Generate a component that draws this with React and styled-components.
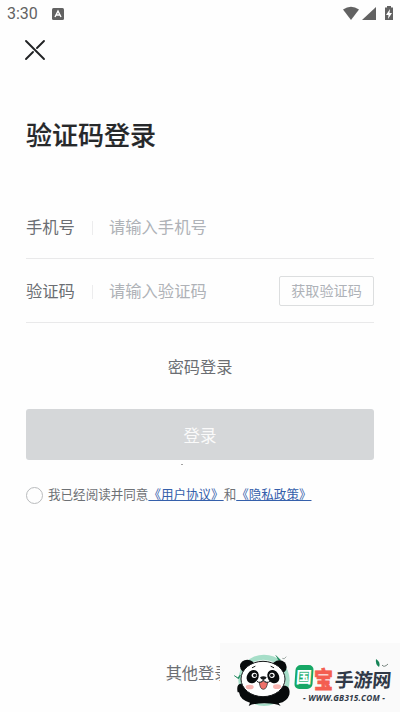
import React, { useState } from 'react';
import styled, { createGlobalStyle } from 'styled-components';

const GlobalStyle = createGlobalStyle`
  * {
    box-sizing: border-box;
  }
  body {
    margin: 0;
    background: #fefefe;
    font-family: Roboto, 'Noto Sans CJK SC', sans-serif;
  }
`;

const Page = styled.div`
  position: relative;
  display: flex;
  flex-direction: column;
  width: 400px;
  height: 712px;
  overflow: hidden;
  background: #fefefe;
`;

const StatusBar = styled.div`
  display: flex;
  align-items: center;
  height: 28px;
  padding: 0 6px 0 7px;
  color: #626262;
`;

const Time = styled.span`
  width: 45px;
  font-size: 16px;
  line-height: 28px;
`;

const StatusIcons = styled.svg`
  margin-left: auto;
`;

const CloseButton = styled.button`
  width: 22px;
  height: 22px;
  margin: 11px 0 0 24px;
  padding: 0;
  border: none;
  background: none;
  cursor: pointer;
  svg {
    display: block;
  }
`;

const Content = styled.div`
  display: flex;
  flex: 1;
  flex-direction: column;
  padding: 55px 26px 0;
`;

const Title = styled.h1`
  margin: 0 0 39px;
  color: #26282a;
  font-size: 26px;
  font-weight: 500;
  line-height: 40px;
  -webkit-text-stroke: 0.2px #26282a;
`;

const Field = styled.div`
  display: flex;
  align-items: center;
  height: 64px;
  padding-top: 2px;
  border-bottom: 1px solid #e9e9ea;
`;

const Label = styled.label`
  width: 67px;
  border-right: 1px solid #ececed;
  color: #6b6e73;
  font-size: 16.3px;
  line-height: 14px;
  white-space: nowrap;
`;

const Input = styled.input`
  flex: 1;
  min-width: 0;
  height: 30px;
  padding: 0 0 0 16px;
  border: none;
  outline: none;
  background: none;
  font-family: inherit;
  font-size: 16.3px;
  &::placeholder {
    color: #afb2b7;
    opacity: 1;
  }
`;

const CodeButton = styled.button`
  width: 95px;
  height: 30px;
  margin-bottom: 2px;
  padding: 0;
  border: 1px solid #dcdedf;
  border-radius: 2px;
  background: none;
  color: #aeb2b8;
  font-family: inherit;
  font-size: 14.1px;
  line-height: 28px;
`;

const TextButton = styled.button`
  align-self: center;
  height: 24px;
  padding: 0;
  border: none;
  background: none;
  color: #6b6e73;
  font-family: inherit;
  font-size: 16.2px;
  line-height: 24px;
`;

const PasswordLogin = styled(TextButton)`
  margin-top: 33px;
`;

const LoginButton = styled.button`
  flex-shrink: 0;
  height: 51px;
  margin: 29px 0 4px;
  padding: 0;
  border: none;
  border-radius: 3px;
  background: #d5d7d9;
  color: #fafafa;
  font-family: inherit;
  font-size: 16.5px;
`;

const Dot = styled.span`
  width: 2px;
  height: 1px;
  margin: 0 0 21px 155px;
  background: #a2a2a2;
`;

const Agreement = styled.div`
  display: flex;
  align-items: center;
  height: 18px;
  color: #6e7175;
  font-size: 12.55px;
  line-height: 18px;
  white-space: nowrap;
`;

const Radio = styled.button`
  width: 17px;
  height: 17px;
  margin-right: 5px;
  padding: 0;
  border: 1px solid #b9bbbd;
  border-radius: 50%;
  background: ${(props) => (props.$checked ? '#3560ab' : 'transparent')};
`;

const Link = styled.a`
  color: #3560ab;
  text-decoration: underline;
  text-decoration-thickness: 1px;
  text-underline-offset: 1px;
`;

const OtherLogin = styled(TextButton)`
  margin: auto 4px 26px 0;
`;

const Brand = styled.div`
  position: absolute;
  right: 0;
  bottom: 0;
  display: flex;
  width: 180px;
  height: 69px;
  background: #fafafa;
`;

const BrandText = styled.div`
  position: relative;
  width: 106px;
  padding-top: 19px;
`;

const BrandName = styled.div`
  display: flex;
  align-items: center;
  height: 30px;
  color: #303947;
  font-family: 'Noto Sans CJK SC', sans-serif;
  font-size: 19px;
  font-weight: 900;
  line-height: 31px;
  white-space: nowrap;
`;

const GreenMark = styled.span`
  display: block;
  width: 18px;
  height: 24px;
  margin: 0 1px 0 1px;
  border-radius: 5px;
  background: #16a765;
  color: #fff;
  font-size: 16px;
  font-weight: 700;
  line-height: 23px;
  text-align: center;
  transform: skewX(-4deg);
`;

const RedMark = styled.span`
  width: 19px;
  margin-right: 2px;
  color: #f45e50;
  font-size: 19px;
  transform: scaleY(1.22);
  -webkit-text-stroke: 0.6px #f45e50;
`;

const DarkMark = styled.span`
  font-size: 19px;
  font-weight: 700;
  letter-spacing: -0.3px;
  transform: translateY(1px) skewX(-5deg);
`;

const Website = styled.div`
  padding-left: 9px;
  color: #303947;
  font-family: 'Open Sans', sans-serif;
  font-size: 8.2px;
  font-style: italic;
  font-weight: 700;
  letter-spacing: 0.2px;
  line-height: 11px;
  white-space: nowrap;
`;

const BrandLeaf = styled.svg`
  position: absolute;
  top: 14px;
  left: 80px;
`;

function DeviceIcons() {
  return (
    <StatusIcons width="52" height="16" viewBox="0 0 52 16" fill="#626262">
      <path d="M1 3.5Q9-2 17 3.5L9 14z" />
      <path d="M34 1v13H20z" />
      <path d="M45 0h4v1.5h2V14h-8V1.5h2z" />
      <path d="M48 3l-4 6h2.5l-.5 4 4-6h-2.5z" fill="#fff" />
    </StatusIcons>
  );
}

function Panda() {
  return (
    <svg width="74" height="69" viewBox="0 3 222 207">
      <circle cx="132" cy="115" r="77" fill="#a6dec8" />
      <circle cx="130" cy="119" r="66" fill="#e9f6f0" />
      <path d="M167 40l15 15-8-2M43 101l10 7 8-9-5 11z" fill="#168457" stroke="#168457" strokeWidth="2" />
      <path d="M187 49q5 5 12-5" fill="none" stroke="#6e7e78" strokeWidth="2" />
      <ellipse cx="82" cy="73" rx="22" ry="20" fill="#080b0c" />
      <ellipse cx="178" cy="75" rx="22" ry="20" fill="#080b0c" />
      <path d="M53 151q-5-24 9-26 14 4 20 24h95q5-20 19-18 16 4 12 27-6 20-32 26l6 8q-14-8-48-8t-48 8l4-10q-30-8-33-31z" fill="#080b0c" />
      <ellipse cx="129" cy="111" rx="66" ry="53" fill="#fff" stroke="#151819" strokeWidth="3" />
      <ellipse cx="98" cy="104" rx="17" ry="21" transform="rotate(32 98 104)" fill="#080b0c" />
      <ellipse cx="160" cy="104" rx="17" ry="21" transform="rotate(-32 160 104)" fill="#080b0c" />
      <circle cx="103" cy="100" r="8" fill="#fff" />
      <circle cx="156" cy="100" r="8" fill="#fff" />
      <circle cx="104" cy="100" r="5" fill="#151819" />
      <circle cx="155" cy="100" r="5" fill="#151819" />
      <path d="M97 77l8-4M153 73l8 4" stroke="#151819" strokeWidth="3" strokeLinecap="round" />
      <path d="M120 106q10-6 20 0-2 7-10 8-8-1-10-8z" fill="#151819" />
      <path d="M111 118q10 8 19-4 9 12 20 4" fill="none" stroke="#151819" strokeWidth="3" />
      <path d="M118 121q2 21 12 21t13-21q-7 2-13-4-6 6-12 4z" fill="#ef7069" stroke="#151819" strokeWidth="2" />
      <ellipse cx="89" cy="135" rx="12" ry="7" fill="#f9b5b1" />
      <ellipse cx="171" cy="134" rx="12" ry="7" fill="#f9b5b1" />
    </svg>
  );
}

function App() {
  const [phone, setPhone] = useState('');
  const [code, setCode] = useState('');
  const [agreed, setAgreed] = useState(false);

  return (
    <Page>
      <GlobalStyle />
      <StatusBar>
        <Time>3:30</Time>
        <svg width="12" height="12" viewBox="0 0 12 12">
          <rect width="12" height="12" rx="1.5" fill="#626262" />
          <path d="M3 9l3-6 3 6M4.3 7h3.4" fill="none" stroke="#fff" strokeWidth="1.4" />
        </svg>
        <DeviceIcons />
      </StatusBar>

      <CloseButton aria-label="关闭">
        <svg width="22" height="22" viewBox="0 0 22 22" fill="none" stroke="#202224" strokeWidth="1.9" strokeLinecap="round">
          <path d="M2 2l18 18M20 2l-7 7M9 13l-7 7" />
        </svg>
      </CloseButton>

      <Content>
        <Title>验证码登录</Title>
        <Field>
          <Label htmlFor="phone">手机号</Label>
          <Input id="phone" value={phone} placeholder="请输入手机号" onChange={(e) => setPhone(e.target.value)} />
        </Field>
        <Field>
          <Label htmlFor="code">验证码</Label>
          <Input id="code" value={code} placeholder="请输入验证码" onChange={(e) => setCode(e.target.value)} />
          <CodeButton>获取验证码</CodeButton>
        </Field>
        <PasswordLogin>密码登录</PasswordLogin>
        <LoginButton>登录</LoginButton>
        <Dot />
        <Agreement>
          <Radio aria-label="同意" $checked={agreed} onClick={() => setAgreed(!agreed)} />
          我已经阅读并同意
          <Link>《用户协议》</Link>
          和
          <Link>《隐私政策》</Link>
        </Agreement>
        <OtherLogin>其他登录</OtherLogin>
      </Content>

      <Brand>
        <Panda />
        <BrandText>
          <BrandName>
            <GreenMark>国</GreenMark>
            <RedMark>宝</RedMark>
            <DarkMark>手游网</DarkMark>
          </BrandName>
          <Website>- WWW.GB315.COM -</Website>
          <BrandLeaf width="16" height="14" viewBox="0 0 16 14">
            <path d="M2 2q5 3 3 8-4-3-3-8z" fill="#168457" />
            <path d="M8 8q2 3 6-1" fill="none" stroke="#74827c" />
          </BrandLeaf>
        </BrandText>
      </Brand>
    </Page>
  );
}

export default App;
